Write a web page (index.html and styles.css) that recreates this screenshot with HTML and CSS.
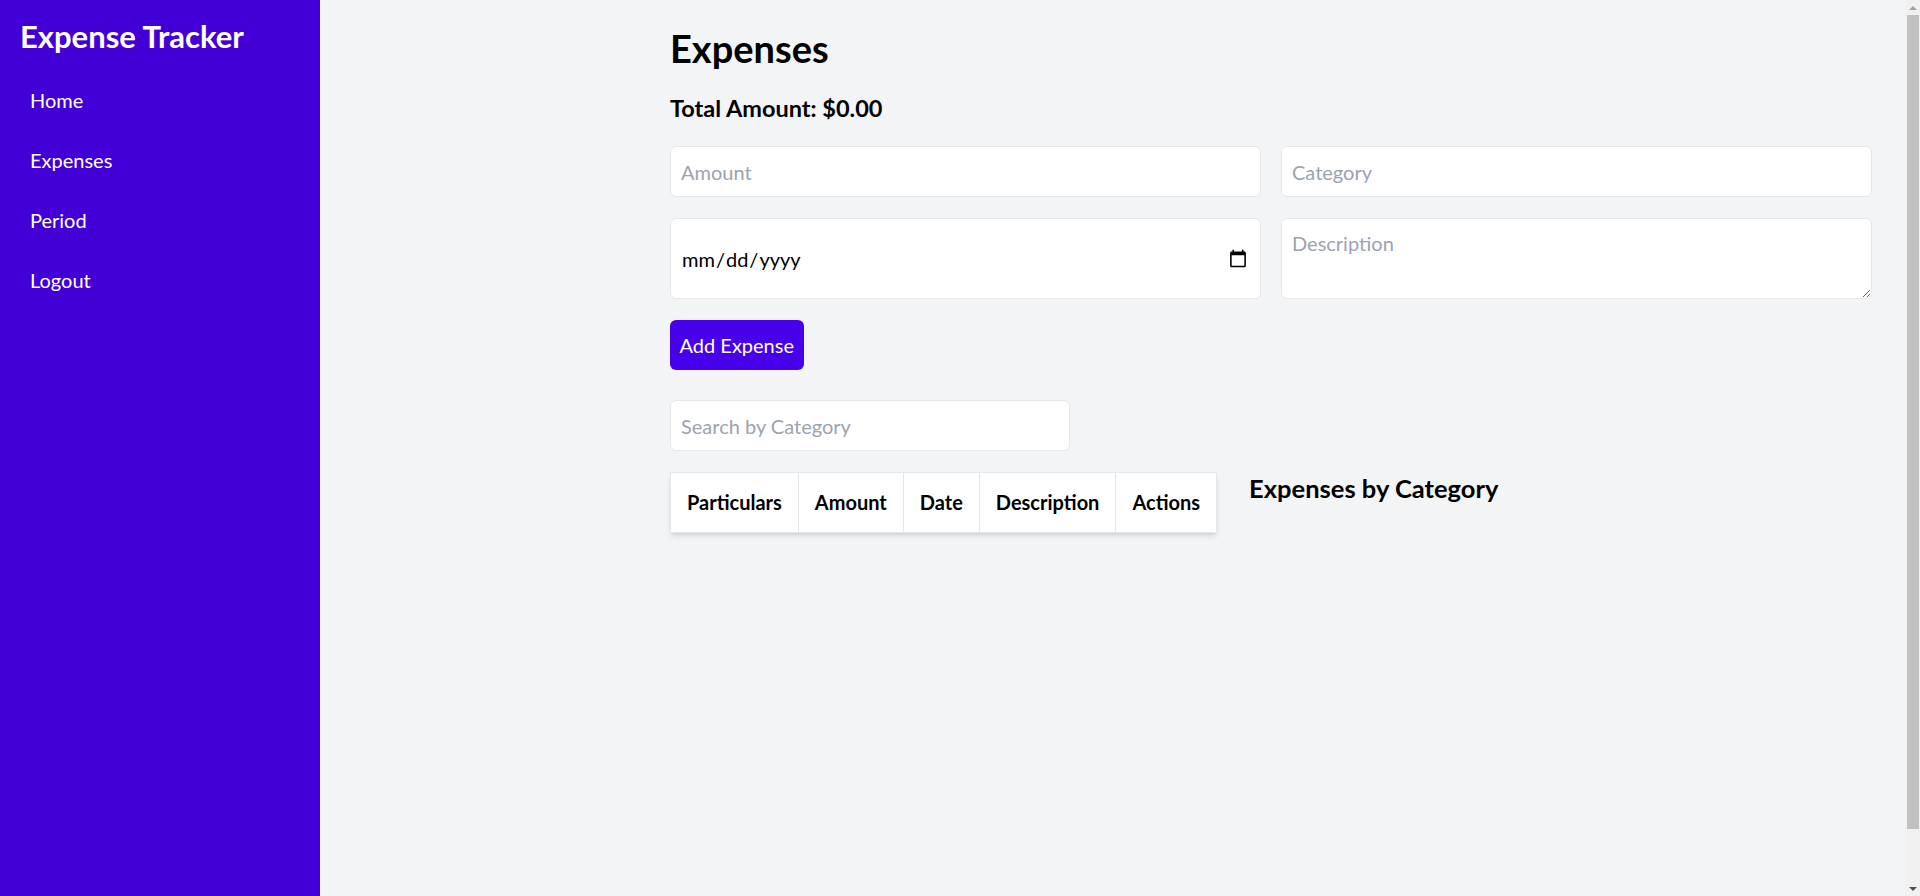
FILE: index.html
```html
<!DOCTYPE html>
<html lang="en">
<head>
<meta charset="utf-8">
<title>Expense Tracker</title>
<link rel="stylesheet" href="styles.css">
</head>
<body>
<div class="layout">
  <aside class="sidebar">
    <h1 class="brand">Expense Tracker</h1>
    <nav class="nav">
      <a class="nav-link" href="#">Home</a>
      <a class="nav-link" href="#">Expenses</a>
      <a class="nav-link" href="#">Period</a>
      <a class="nav-link" href="#">Logout</a>
    </nav>
  </aside>
  <main class="main">
    <div class="content">
      <h2 class="page-title">Expenses</h2>
      <p class="total">Total Amount: $0.00</p>
      <form class="expense-form">
        <div class="form-grid">
          <input class="field" type="number" placeholder="Amount">
          <input class="field" type="text" placeholder="Category">
          <input class="field field-tall" type="date">
          <textarea class="field field-tall" placeholder="Description"></textarea>
        </div>
        <button class="btn" type="button">Add Expense</button>
      </form>
      <input class="field search" type="text" placeholder="Search by Category">
      <div class="bottom">
        <table class="table">
          <thead>
            <tr>
              <th>Particulars</th>
              <th>Amount</th>
              <th>Date</th>
              <th>Description</th>
              <th>Actions</th>
            </tr>
          </thead>
          <tbody></tbody>
        </table>
        <section class="chart">
          <h3 class="chart-title">Expenses by Category</h3>
          <div class="chart-canvas"></div>
        </section>
      </div>
    </div>
  </main>
  <div class="scrollbar" aria-hidden="true">
    <div class="sb-btn sb-up"><span class="sb-arrow-up"></span></div>
    <div class="sb-track"><div class="sb-thumb"></div></div>
    <div class="sb-btn sb-down"><span class="sb-arrow-down"></span></div>
  </div>
</div>
</body>
</html>
```
FILE: styles.css
```css
*, *::before, *::after { box-sizing: border-box; }

html, body {
  margin: 0;
  padding: 0;
}

body {
  font-family: "Lato", "Open Sans", sans-serif;
  background: #f3f4f6;
  color: #000;
}

.layout {
  display: flex;
  height: 100vh;
  overflow: hidden;
}

/* Sidebar */
.sidebar {
  width: 320px;
  flex-shrink: 0;
  background: #4200d7;
  color: #fff;
  padding: 18px 16px 16px;
}

.brand {
  margin: 0 0 16px 4px;
  font-size: 31px;
  line-height: 36px;
  font-weight: 700;
}

.nav {
  display: flex;
  flex-direction: column;
}

.nav-link {
  display: block;
  color: #fff;
  text-decoration: none;
  font-size: 20px;
  line-height: 28px;
  padding: 16px 14px;
}

/* Main */
.main {
  flex: 1;
  min-width: 0;
  overflow-y: auto;
  scrollbar-width: none;
  padding: 24px 33px 32px 32px;
}

.content {
  max-width: 1202px;
  margin-left: auto;
}

.page-title {
  margin: 0;
  font-size: 38px;
  line-height: 48px;
  font-weight: 700;
}

.total {
  margin: 22px 0 24px;
  font-size: 23.5px;
  line-height: 28px;
  font-weight: 700;
}

.form-grid {
  display: grid;
  grid-template-columns: 1fr 1fr;
  gap: 21px 20px;
}

.field {
  display: block;
  width: 100%;
  height: 51px;
  margin: 0;
  padding: 0 10px;
  border: 1px solid #e5e7eb;
  border-radius: 6px;
  background: #fff;
  font-family: inherit;
  font-size: 20px;
  color: #000;
  outline: none;
}

.field::placeholder {
  color: #9ca3af;
}

.field-tall {
  height: 81px;
}

textarea.field {
  padding: 10px 10px;
  line-height: 28px;
  resize: vertical;
}

.btn {
  display: block;
  margin-top: 21px;
  height: 50px;
  padding: 0 9.5px;
  border: none;
  border-radius: 6px;
  background: #4700ea;
  color: #fff;
  font-family: inherit;
  font-size: 20px;
}

.search {
  width: 400px;
  margin-top: 30px;
}

.bottom {
  display: flex;
  align-items: flex-start;
  gap: 32px;
  margin-top: 21px;
}

.table {
  border-collapse: collapse;
  background: #fff;
  box-shadow: 0 4px 6px -1px rgba(0,0,0,0.1), 0 2px 4px -2px rgba(0,0,0,0.1);
}

.table th {
  border: 1px solid #e5e7eb;
  padding: 16px;
  font-size: 20px;
  line-height: 27px;
  font-weight: 700;
  text-align: left;
  white-space: nowrap;
}

.chart {
  flex: 1;
}

.chart-title {
  margin: 0;
  font-size: 25.5px;
  line-height: 32px;
  font-weight: 700;
}

.chart-canvas {
  height: 416px;
}

/* Page scrollbar */
.scrollbar {
  width: 15px;
  flex-shrink: 0;
  display: flex;
  flex-direction: column;
  background: #f1f1f1;
}

.sb-btn {
  height: 15px;
  display: flex;
  align-items: center;
  justify-content: center;
}

.sb-arrow-up {
  width: 0;
  height: 0;
  border-left: 4px solid transparent;
  border-right: 4px solid transparent;
  border-bottom: 4px solid #a3a3a3;
}

.sb-arrow-down {
  width: 0;
  height: 0;
  border-left: 4px solid transparent;
  border-right: 4px solid transparent;
  border-top: 4px solid #505050;
}

.sb-track {
  flex: 1;
  padding: 0 1px 52px 2px;
}

.sb-thumb {
  height: 100%;
  background: #c1c1c1;
}
```
